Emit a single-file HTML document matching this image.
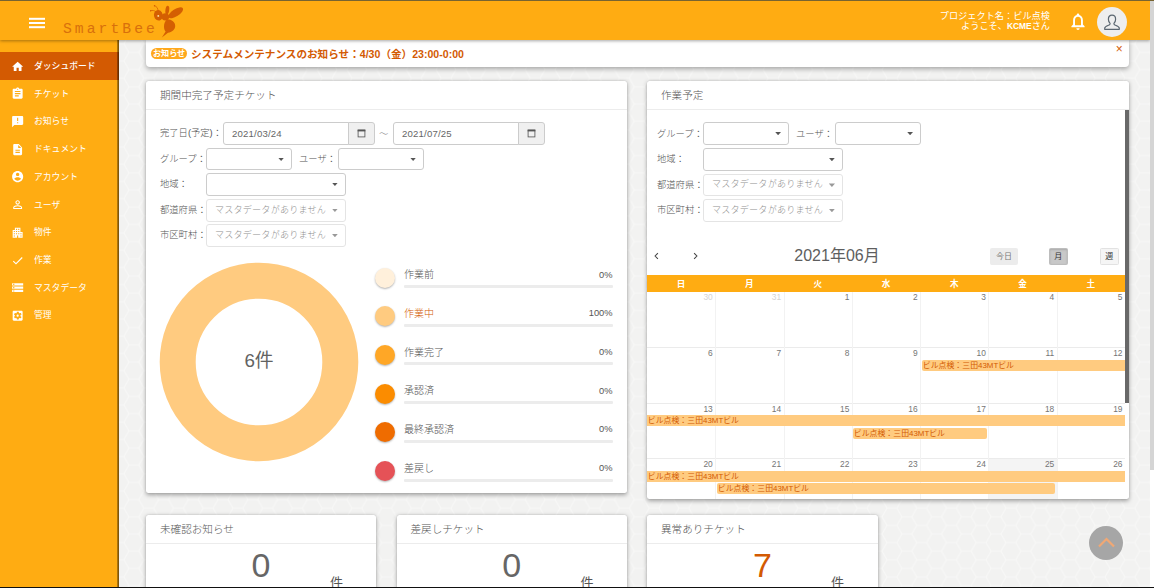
<!DOCTYPE html>
<html lang="ja">
<head>
<meta charset="utf-8">
<title>SmartBee</title>
<style>
*{box-sizing:border-box;margin:0;padding:0}
html,body{width:1154px;height:588px;overflow:hidden}
body{position:relative;background:#f2f2f1;font-family:"Liberation Sans","Noto Sans CJK JP",sans-serif;font-size:9.7px;color:#555;line-height:1}
.abs{position:absolute}
#bg{left:0;top:0;width:1154px;height:588px}
#topline{left:0;top:0;width:1154px;height:1px;background:#776431;z-index:50}
#botline{left:0;top:587px;width:1154px;height:1px;background:#111;z-index:50}
#vscroll{left:1150px;top:1px;width:4px;height:587px;background:#fff;z-index:40}
#vthumb{left:1150px;top:1px;width:4px;height:468.7px;background:#d5d5d5;z-index:41}
#header{left:0;top:1px;width:1150px;height:39px;background:#ffac12;box-shadow:0 1px 3px rgba(0,0,0,.35);z-index:30}
#sidebar{left:0;top:40px;width:119px;height:548px;background:#ffac12;z-index:20}
#sbedge{left:116.5px;top:40px;width:2.5px;height:548px;background:linear-gradient(to right,rgba(0,0,0,.12),rgba(0,0,0,.5) 45%,rgba(0,0,0,.5));z-index:21}
.logo{left:63px;top:20.5px;font-family:"Liberation Mono",monospace;font-size:14.7px;letter-spacing:3.05px;color:#d8700c;white-space:nowrap}
.hd-txt{right:100px;top:10.3px;text-align:right;color:#fff;font-size:9.2px;line-height:10px;white-space:nowrap}
.mi{left:0;width:119px;height:27.7px;color:#fff;font-size:8.8px;white-space:nowrap}
.mi span{position:absolute;left:34px;top:10.1px}
.mi svg{position:absolute;left:11.35px;top:7.65px;width:13.3px;height:13.3px;fill:#fff}
.mi.act{background:#d35a02;font-weight:500}
.card{background:#fff;border-radius:2.5px;box-shadow:0 1.5px 4.5px rgba(0,0,0,.34),0 0 1.5px rgba(0,0,0,.12)}
.ctitle{font-size:10.6px;font-weight:300;color:#555;white-space:nowrap}
.sep{height:1px;background:#ececec}
.lbl{font-size:9.3px;font-weight:300;color:#555;white-space:nowrap}
.inp{border:1px solid #ccc;border-radius:3px;background:#fff;height:22px}
.inp.dis{border-color:#e4e4e4}
.inp .v{position:absolute;left:8px;top:5.5px;font-size:9.6px;letter-spacing:.18px;color:#666;white-space:nowrap}
.inp.dis .v{color:#909090;font-size:9.1px;top:5.6px;font-weight:300}
.caret{position:absolute;right:6.8px;top:8.5px;width:6.2px;height:3.5px;background:#555;clip-path:polygon(0 0,100% 0,50% 100%)}
.inp.dis .caret{background:#999}
.addon{border:1px solid #ccc;border-left:none;border-radius:0 3px 3px 0;background:#f0f0f0;height:22px;width:27px}
.badge{background:#ffa81c;color:#fff;font-weight:bold;font-size:8.1px;height:11.5px;line-height:11.5px;padding:0 2px;border-radius:7px;white-space:nowrap}
.dot{width:20px;height:20px;border-radius:50%;box-shadow:0 1px 2px rgba(0,0,0,.3)}
.lg{font-size:10px;font-weight:300;color:#555;white-space:nowrap}
.bar{height:3px;background:#ececec;border-radius:1px}
.btn{height:17px;border:1px solid #ddd;border-radius:1.5px;font-size:8px;text-align:center;line-height:15px;white-space:nowrap}
.dh{color:#fff;font-weight:bold;font-size:8.6px;text-align:center}
.dn{font-size:8.4px;text-align:right}
.ev{height:11.5px;background:#ffcb80;color:#d35a02;font-size:7.9px;line-height:11.5px;padding-left:0.8px;white-space:nowrap;overflow:hidden}
</style>
</head>
<body>
<svg id="bg" class="abs" width="1154" height="588">
<defs>
<pattern id="hex" width="29.73" height="17.2" patternUnits="userSpaceOnUse" x="5" y="0.8">
<path d="M0 8.60 L4.96 0 L14.87 0 L19.82 8.60 L14.87 17.2 L4.96 17.2 Z M19.82 8.60 L29.73 8.60" fill="none" stroke="#f8f8f7" stroke-width="1"/>
</pattern>
</defs>
<rect width="1154" height="588" fill="#f2f2f1"/>
<rect width="1154" height="588" fill="url(#hex)"/>
</svg>

<div id="topline" class="abs"></div>
<div id="botline" class="abs"></div>
<div id="vscroll" class="abs"></div>
<div id="vthumb" class="abs"></div>

<!-- HEADER -->
<div id="header" class="abs">
  <svg class="abs" style="left:28px;top:15.5px" width="18" height="12" viewBox="0 0 18 12"><rect x="1" y="0.8" width="16" height="2" fill="#fff"/><rect x="1" y="5" width="16" height="2" fill="#fff"/><rect x="1" y="9.2" width="16" height="2" fill="#fff"/></svg>
  <div class="abs logo">SmartBee</div>
  <svg class="abs" style="left:148px;top:2px" width="38" height="38" viewBox="148 3 38 38">
    <g fill="#d45f02" stroke="none">
      <ellipse cx="158.4" cy="15.3" rx="4.4" ry="5.3" transform="rotate(-15 158.4 15.3)"/>
      <ellipse cx="165.4" cy="16.8" rx="3.8" ry="3.6"/>
      <ellipse cx="167.3" cy="9.9" rx="1.9" ry="4.2" transform="rotate(8 167.3 9.9)"/>
      <ellipse cx="175.7" cy="12.8" rx="8.5" ry="3.6" transform="rotate(-32.5 175.7 12.8)"/>
      <path d="M167.3 19.3 C171.8 19.3 175.2 22.3 175.2 26 C175.2 29.6 172 32 168 32.8 C166.4 33.8 164 36 161.8 37.6 C163.2 35.6 164.800 33.200 165.600 31.600 C164.400 30.200 164 28.400 164 26.400 C164 23.600 165.200 20.800 167.300 19.300 Z"/>
    </g>
    <g fill="none" stroke="#d45f02" stroke-width="0.75" stroke-linecap="round">
      <path d="M158.1 10.6 C157.900 8.200 156.800 6.300 154.600 5.800"/>
      <path d="M155.900 11.900 C154.600 10.400 152.400 10 150.700 10.700"/>
    </g>
    <circle cx="154.500" cy="5.800" r="0.700" fill="#d45f02"/><circle cx="150.700" cy="10.700" r="0.700" fill="#d45f02"/>
    <circle cx="158.3" cy="15.9" r="0.95" fill="#ffe3a8"/>
  </svg>
  <div class="abs hd-txt">プロジェクト名：ビル点検<br>ようこそ、<b style="font-size:8.4px">KCME</b>さん</div>
  <svg class="abs" style="left:1069px;top:11px" width="18" height="20" viewBox="0 0 18 20">
    <path d="M9 1.6 C9.8 1.6 10.3 2.2 10.3 3 C12.7 3.7 13.9 5.6 13.9 8.2 L13.9 12.4 L15.6 14.3 L15.6 15.2 L2.4 15.2 L2.4 14.3 L4.1 12.4 L4.1 8.2 C4.1 5.6 5.3 3.7 7.7 3 C7.7 2.2 8.2 1.6 9 1.6 Z M6 8.3 L6 13.3 L12 13.3 L12 8.3 C12 6.2 10.9 4.8 9 4.8 C7.1 4.8 6 6.2 6 8.3 Z M7.4 16.2 L10.6 16.2 C10.6 17.2 9.9 17.9 9 17.9 C8.1 17.9 7.4 17.2 7.4 16.2 Z" fill="#fff" fill-rule="evenodd"/>
  </svg>
  <div class="abs" style="left:1097px;top:6px;width:30px;height:30px;border-radius:50%;background:#eeeeee"></div>
  <svg class="abs" style="left:1097px;top:6px" width="30" height="30" viewBox="0 0 30 30">
    <path d="M15 8.2 C17.3 8.2 18.6 9.9 18.6 12.2 C18.6 14 17.9 15.5 16.9 16.4 C16.9 17.4 17.3 17.8 18.4 18.2 C20.6 19 22.3 19.6 22.3 21.2 L22.3 22.3 L7.7 22.3 L7.7 21.2 C7.7 19.6 9.4 19 11.6 18.2 C12.7 17.8 13.1 17.4 13.1 16.4 C12.1 15.5 11.4 14 11.4 12.2 C11.4 9.9 12.7 8.2 15 8.2 Z" fill="none" stroke="#5b6670" stroke-width="1.2" stroke-linejoin="round"/>
  </svg>
</div>

<div id="sbedge" class="abs"></div>
<!-- SIDEBAR -->
<div id="sidebar" class="abs">
  <div class="abs mi act" style="top:12.0px"><svg viewBox="0 0 24 24"><path d="M10 20v-6h4v6h5v-8h3L12 3 2 12h3v8z"/></svg><span>ダッシュボード</span></div>
  <div class="abs mi" style="top:39.7px"><svg viewBox="0 0 24 24"><path d="M19 3h-4.18C14.4 1.84 13.3 1 12 1c-1.3 0-2.4.84-2.82 2H5c-1.100 0-2 .9-2 2v14c0 1.100.9 2 2 2h14c1.100 0 2-.9 2-2V5c0-1.100-.9-2-2-2zm-7 0c.55 0 1 .45 1 1s-.45 1-1 1-1-.45-1-1 .45-1 1-1zm2 14H7v-2h7v2zm3-4H7v-2h10v2zm0-4H7V7h10v2z"/></svg><span>チケット</span></div>
  <div class="abs mi" style="top:67.4px"><svg viewBox="0 0 24 24"><path d="M20 2H4c-1.100 0-1.990.9-1.990 2L2 22l4-4h14c1.100 0 2-.9 2-2V4c0-1.100-.9-2-2-2zm-7 9h-2V5h2v6zm0 4h-2v-2h2v2z"/></svg><span>お知らせ</span></div>
  <div class="abs mi" style="top:95.1px"><svg viewBox="0 0 24 24"><path d="M14 2H6c-1.100 0-1.990.9-1.990 2L4 20c0 1.100.89 2 1.990 2H18c1.100 0 2-.9 2-2V8l-6-6zm2 16H8v-2h8v2zm0-4H8v-2h8v2zm-3-5V3.500L18.500 9H13z"/></svg><span>ドキュメント</span></div>
  <div class="abs mi" style="top:122.8px"><svg viewBox="0 0 24 24"><path d="M12 2C6.480 2 2 6.480 2 12s4.480 10 10 10 10-4.480 10-10S17.520 2 12 2zm0 3c1.660 0 3 1.340 3 3s-1.340 3-3 3-3-1.340-3-3 1.340-3 3-3zm0 14.200c-2.500 0-4.710-1.280-6-3.220.03-1.990 4-3.080 6-3.080 1.990 0 5.970 1.090 6 3.080-1.290 1.940-3.500 3.220-6 3.220z"/></svg><span>アカウント</span></div>
  <div class="abs mi" style="top:150.5px"><svg viewBox="0 0 24 24"><path d="M12 5.900c1.160 0 2.100.94 2.100 2.100s-.94 2.100-2.100 2.100S9.900 9.160 9.900 8s.94-2.100 2.100-2.100m0 9c2.970 0 6.100 1.460 6.100 2.100v1.100H5.900V17c0-.64 3.130-2.100 6.100-2.100M12 4C9.790 4 8 5.790 8 8s1.790 4 4 4 4-1.790 4-4-1.790-4-4-4zm0 9c-2.670 0-8 1.340-8 4v3h16v-3c0-2.660-5.330-4-8-4z"/></svg><span>ユーザ</span></div>
  <div class="abs mi" style="top:178.2px"><svg viewBox="0 0 24 24"><path d="M17 11V3H7v4H3v14h8v-4h2v4h8V11h-4zM7 19H5v-2h2v2zm0-4H5v-2h2v2zm0-4H5V9h2v2zm4 4H9v-2h2v2zm0-4H9V9h2v2zm0-4H9V5h2v2zm4 8h-2v-2h2v2zm0-4h-2V9h2v2zm0-4h-2V5h2v2zm4 12h-2v-2h2v2zm0-4h-2v-2h2v2z"/></svg><span>物件</span></div>
  <div class="abs mi" style="top:205.9px"><svg viewBox="0 0 24 24"><path d="M9 16.170L4.830 12l-1.420 1.410L9 19 21 7l-1.410-1.410z"/></svg><span>作業</span></div>
  <div class="abs mi" style="top:233.6px"><svg viewBox="0 0 24 24"><path d="M2 20h20v-4H2v4zm2-3h2v2H4v-2zM2 4v4h20V4H2zm4 3H4V5h2v2zm-4 7h20v-4H2v4zm2-3h2v2H4v-2z"/></svg><span>マスタデータ</span></div>
  <div class="abs mi" style="top:261.3px"><svg viewBox="0 0 24 24"><path d="M12 10c-1.100 0-2 .9-2 2s.9 2 2 2 2-.9 2-2-.9-2-2-2zm7-7H5c-1.110 0-2 .9-2 2v14c0 1.100.89 2 2 2h14c1.110 0 2-.9 2-2V5c0-1.100-.89-2-2-2zm-1.750 9c0 .23-.2.460-.5.680l1.480 1.160c.13.110.17.300.8.450l-1.400 2.420c-.9.150-.27.210-.43.150l-1.740-.7c-.36.280-.76.510-1.180.69l-.26 1.850c-.3.170-.18.300-.35.300h-2.800c-.17 0-.32-.13-.35-.29l-.26-1.850c-.43-.18-.82-.410-1.180-.69l-1.740.7c-.16.060-.34 0-.43-.15l-1.400-2.420c-.09-.15-.05-.34.080-.45l1.480-1.160c-.03-.23-.05-.46-.05-.69 0-.23.020-.46.050-.68l-1.480-1.160c-.13-.11-.17-.300-.08-.45l1.400-2.420c.09-.15.270-.21.430-.15l1.740.7c.36-.28.760-.51 1.180-.69l.26-1.850c.03-.17.180-.300.350-.300h2.800c.17 0 .32.130.35.290l.26 1.850c.43.180.82.410 1.180.69l1.740-.7c.16-.06.340 0 .43.150l1.400 2.420c.9.150.5.340-.8.450l-1.480 1.160c.3.230.5.460.5.690z"/></svg><span>管理</span></div>
</div>

<!-- CONTENT PLACEHOLDER -->
<div id="content">
<div class="abs card" id="banner" style="left:146px;top:40px;width:983px;height:26.5px;border-radius:0 0 4px 4px;z-index:10;box-shadow:0 2px 5px rgba(0,0,0,.32)">
<div class="abs badge" style="left:5px;top:7.9px">お知らせ</div>
<div class="abs" style="left:45px;top:8.5px;font-size:10.6px;font-weight:bold;color:#d35a02;white-space:nowrap">システムメンテナンスのお知らせ：4/30（金）23:00-0:00</div>
<div class="abs" style="left:969.8px;top:3px;font-size:12px;color:#d35a02">×</div>
</div>
<div class="abs card" id="card1" style="left:146px;top:80.5px;width:481px;height:412px">
<div class="abs ctitle" style="left:14px;top:9px">期間中完了予定チケット</div>
<div class="abs sep" style="left:0;top:28.5px;width:481px"></div>
<div class="abs lbl" style="left:14px;top:48.5px">完了日(予定)：</div>
<div class="abs inp" style="left:77px;top:41.5px;width:126px;height:22.5px;border-radius:3px 0 0 3px"><span class="v">2021/03/24</span></div>
<div class="abs addon" style="left:202px;top:41.5px;height:22.5px;border-left:1px solid #ccc"><svg class="abs" style="left:7.3px;top:5.3px" width="11" height="11" viewBox="0 0 10 10"><rect x="1.9" y="1.9" width="6.2" height="6.2" fill="none" stroke="#555" stroke-width="0.75"/><rect x="1.5" y="1.5" width="7" height="1.6" fill="#555"/></svg></div>
<div class="abs lbl" style="left:233px;top:49.3px;color:#888">～</div>
<div class="abs inp" style="left:247px;top:41.5px;width:126px;height:22.5px;border-radius:3px 0 0 3px"><span class="v">2021/07/25</span></div>
<div class="abs addon" style="left:372px;top:41.5px;height:22.5px;border-left:1px solid #ccc"><svg class="abs" style="left:7.3px;top:5.3px" width="11" height="11" viewBox="0 0 10 10"><rect x="1.9" y="1.9" width="6.2" height="6.2" fill="none" stroke="#555" stroke-width="0.75"/><rect x="1.5" y="1.5" width="7" height="1.6" fill="#555"/></svg></div>
<div class="abs lbl" style="left:14px;top:74.3px">グループ：</div>
<div class="abs inp" style="left:60px;top:67.5px;width:86px;height:22px"><i class="caret"></i></div>
<div class="abs lbl" style="left:153px;top:74.3px">ユーザ：</div>
<div class="abs inp" style="left:192px;top:67.5px;width:86px;height:22px"><i class="caret"></i></div>
<div class="abs lbl" style="left:14px;top:99.8px">地域：</div>
<div class="abs inp" style="left:60px;top:92.5px;width:139.8px;height:23px"><i class="caret"></i></div>
<div class="abs lbl" style="left:14px;top:125.8px">都道府県：</div>
<div class="abs inp dis" style="left:60px;top:118.5px;width:139.8px;height:22.7px"><span class="v">マスタデータがありません</span><i class="caret"></i></div>
<div class="abs lbl" style="left:14px;top:150.8px">市区町村：</div>
<div class="abs inp dis" style="left:60px;top:143.7px;width:139.8px;height:22.7px"><span class="v">マスタデータがありません</span><i class="caret"></i></div>
<svg class="abs" style="left:13.2px;top:181.2px" width="200" height="200" viewBox="0 0 200 200"><circle cx="100" cy="100" r="81.3" fill="none" stroke="#ffcb80" stroke-width="36"/><text x="100" y="104.6" text-anchor="middle" font-size="18.8" fill="#626262" font-family="'Liberation Sans','Noto Sans CJK JP',sans-serif">6件</text></svg>
<div class="abs dot" style="left:229px;top:187.0px;background:#fff0db"></div>
<div class="abs lg" style="left:258px;top:189.6px;color:#555">作業前</div>
<div class="abs lg" style="right:14.5px;top:190.0px;text-align:right;font-size:9.3px">0%</div>
<div class="abs bar" style="left:258px;top:204.5px;width:208.500px"></div>
<div class="abs dot" style="left:229px;top:225.7px;background:#ffcb80"></div>
<div class="abs lg" style="left:258px;top:228.3px;color:#d35a02">作業中</div>
<div class="abs lg" style="right:14.5px;top:228.7px;text-align:right;font-size:9.3px">100%</div>
<div class="abs bar" style="left:258px;top:243.2px;width:208.500px"></div>
<div class="abs dot" style="left:229px;top:264.4px;background:#ffa726"></div>
<div class="abs lg" style="left:258px;top:267.0px;color:#555">作業完了</div>
<div class="abs lg" style="right:14.5px;top:267.4px;text-align:right;font-size:9.3px">0%</div>
<div class="abs bar" style="left:258px;top:281.9px;width:208.500px"></div>
<div class="abs dot" style="left:229px;top:303.1px;background:#fb8c00"></div>
<div class="abs lg" style="left:258px;top:305.7px;color:#555">承認済</div>
<div class="abs lg" style="right:14.5px;top:306.1px;text-align:right;font-size:9.3px">0%</div>
<div class="abs bar" style="left:258px;top:320.6px;width:208.500px"></div>
<div class="abs dot" style="left:229px;top:341.8px;background:#ef6c00"></div>
<div class="abs lg" style="left:258px;top:344.4px;color:#555">最終承認済</div>
<div class="abs lg" style="right:14.5px;top:344.8px;text-align:right;font-size:9.3px">0%</div>
<div class="abs bar" style="left:258px;top:359.3px;width:208.500px"></div>
<div class="abs dot" style="left:229px;top:380.5px;background:#e55257"></div>
<div class="abs lg" style="left:258px;top:383.1px;color:#555">差戻し</div>
<div class="abs lg" style="right:14.5px;top:383.5px;text-align:right;font-size:9.3px">0%</div>
<div class="abs bar" style="left:258px;top:398.0px;width:208.500px"></div>
</div>
<div class="abs card" id="card2" style="left:647px;top:80.5px;width:482px;height:418.5px;overflow:hidden">
<div class="abs ctitle" style="left:14px;top:9px">作業予定</div>
<div class="abs sep" style="left:0;top:28.5px;width:482px"></div>
<div class="abs" style="left:478px;top:29px;width:4px;height:293.3px;background:#686868"></div>
<div class="abs lbl" style="left:10px;top:49px">グループ：</div>
<div class="abs inp" style="left:56px;top:41.7px;width:86px;height:22.5px"><i class="caret"></i></div>
<div class="abs lbl" style="left:149px;top:49px">ユーザ：</div>
<div class="abs inp" style="left:188px;top:41.7px;width:86px;height:22.5px"><i class="caret"></i></div>
<div class="abs lbl" style="left:10px;top:74.5px">地域：</div>
<div class="abs inp" style="left:56px;top:67.7px;width:139.8px;height:22.6px"><i class="caret"></i></div>
<div class="abs lbl" style="left:10px;top:100.3px">都道府県：</div>
<div class="abs inp dis" style="left:56px;top:93.4px;width:139.8px;height:22.3px"><span class="v">マスタデータがありません</span><i class="caret"></i></div>
<div class="abs lbl" style="left:10px;top:125.8px">市区町村：</div>
<div class="abs inp dis" style="left:56px;top:118.7px;width:139.8px;height:22.5px"><span class="v">マスタデータがありません</span><i class="caret"></i></div>
<svg class="abs" style="left:6px;top:171.500px" width="7" height="8" viewBox="0 0 7 8"><path d="M4.900 1.200 L2.100 4 L4.900 6.800" fill="none" stroke="#444" stroke-width="1.050"/></svg>
<svg class="abs" style="left:44.500px;top:171.500px" width="7" height="8" viewBox="0 0 7 8"><path d="M2.100 1.200 L4.900 4 L2.100 6.800" fill="none" stroke="#444" stroke-width="1.050"/></svg>
<div class="abs" style="left:90px;top:167.5px;width:200px;text-align:center;font-size:16px;color:#5e5e5e;white-space:nowrap">2021年06月</div>
<div class="abs btn" style="left:343px;top:167.5px;width:27.8px;background:#ececec;border-color:#ececec;color:#777">今日</div>
<div class="abs btn" style="left:401.7px;top:167.5px;width:19px;background:#c8c8c8;border-color:#bdbdbd;color:#333;box-shadow:inset 0 1px 2px rgba(0,0,0,.15)">月</div>
<div class="abs btn" style="left:452.8px;top:167.5px;width:19px;background:#f5f5f5;border-color:#e2e2e2;color:#333">週</div>
<div class="abs" style="left:0;top:194.5px;width:478px;height:17px;background:#ffac12"></div>
<div class="abs dh" style="left:0.00px;top:199.2px;width:68.29px">日</div>
<div class="abs dh" style="left:68.29px;top:199.2px;width:68.29px">月</div>
<div class="abs dh" style="left:136.57px;top:199.2px;width:68.29px">火</div>
<div class="abs dh" style="left:204.86px;top:199.2px;width:68.29px">水</div>
<div class="abs dh" style="left:273.14px;top:199.2px;width:68.29px">木</div>
<div class="abs dh" style="left:341.43px;top:199.2px;width:68.29px">金</div>
<div class="abs dh" style="left:409.71px;top:199.2px;width:68.29px">土</div>
<div class="abs" style="left:341.43px;top:377.5px;width:68.29px;height:56px;background:#f4f4f4"></div>
<div class="abs dn" style="left:0.00px;top:212.3px;width:65.79px;color:#d4d4d4">30</div>
<div class="abs dn" style="left:68.29px;top:212.3px;width:65.79px;color:#d4d4d4">31</div>
<div class="abs dn" style="left:136.57px;top:212.3px;width:65.79px;color:#757575">1</div>
<div class="abs dn" style="left:204.86px;top:212.3px;width:65.79px;color:#757575">2</div>
<div class="abs dn" style="left:273.14px;top:212.3px;width:65.79px;color:#757575">3</div>
<div class="abs dn" style="left:341.43px;top:212.3px;width:65.79px;color:#757575">4</div>
<div class="abs dn" style="left:409.71px;top:212.3px;width:65.79px;color:#757575">5</div>
<div class="abs" style="left:0;top:266.5px;width:478px;height:1px;background:#ebebeb"></div>
<div class="abs dn" style="left:0.00px;top:268.5px;width:65.79px;color:#757575">6</div>
<div class="abs dn" style="left:68.29px;top:268.5px;width:65.79px;color:#757575">7</div>
<div class="abs dn" style="left:136.57px;top:268.5px;width:65.79px;color:#757575">8</div>
<div class="abs dn" style="left:204.86px;top:268.5px;width:65.79px;color:#757575">9</div>
<div class="abs dn" style="left:273.14px;top:268.5px;width:65.79px;color:#757575">10</div>
<div class="abs dn" style="left:341.43px;top:268.5px;width:65.79px;color:#757575">11</div>
<div class="abs dn" style="left:409.71px;top:268.5px;width:65.79px;color:#757575">12</div>
<div class="abs" style="left:0;top:322.5px;width:478px;height:1px;background:#ebebeb"></div>
<div class="abs dn" style="left:0.00px;top:324.5px;width:65.79px;color:#757575">13</div>
<div class="abs dn" style="left:68.29px;top:324.5px;width:65.79px;color:#757575">14</div>
<div class="abs dn" style="left:136.57px;top:324.5px;width:65.79px;color:#757575">15</div>
<div class="abs dn" style="left:204.86px;top:324.5px;width:65.79px;color:#757575">16</div>
<div class="abs dn" style="left:273.14px;top:324.5px;width:65.79px;color:#757575">17</div>
<div class="abs dn" style="left:341.43px;top:324.5px;width:65.79px;color:#757575">18</div>
<div class="abs dn" style="left:409.71px;top:324.5px;width:65.79px;color:#757575">19</div>
<div class="abs" style="left:0;top:377.5px;width:478px;height:1px;background:#ebebeb"></div>
<div class="abs dn" style="left:0.00px;top:379.5px;width:65.79px;color:#757575">20</div>
<div class="abs dn" style="left:68.29px;top:379.5px;width:65.79px;color:#757575">21</div>
<div class="abs dn" style="left:136.57px;top:379.5px;width:65.79px;color:#757575">22</div>
<div class="abs dn" style="left:204.86px;top:379.5px;width:65.79px;color:#757575">23</div>
<div class="abs dn" style="left:273.14px;top:379.5px;width:65.79px;color:#757575">24</div>
<div class="abs dn" style="left:341.43px;top:379.5px;width:65.79px;color:#757575">25</div>
<div class="abs dn" style="left:409.71px;top:379.5px;width:65.79px;color:#757575">26</div>
<div class="abs" style="left:68.29px;top:211.5px;width:1px;height:230px;background:#f2f2f2"></div>
<div class="abs" style="left:136.57px;top:211.5px;width:1px;height:230px;background:#f2f2f2"></div>
<div class="abs" style="left:204.86px;top:211.5px;width:1px;height:230px;background:#f2f2f2"></div>
<div class="abs" style="left:273.14px;top:211.5px;width:1px;height:230px;background:#f2f2f2"></div>
<div class="abs" style="left:341.43px;top:211.5px;width:1px;height:230px;background:#f2f2f2"></div>
<div class="abs" style="left:409.71px;top:211.5px;width:1px;height:230px;background:#f2f2f2"></div>
<div class="abs ev" style="left:275.0px;top:279.0px;width:203.0px;border-radius:2px 0 0 2px">ビル点検：三田43MTビル</div>
<div class="abs ev" style="left:0.0px;top:334.0px;width:478.0px;border-radius:0 0 0 0">ビル点検：三田43MTビル</div>
<div class="abs ev" style="left:206.0px;top:347.0px;width:134.0px;border-radius:2px 2px 2px 2px">ビル点検：三田43MTビル</div>
<div class="abs ev" style="left:0.0px;top:390.0px;width:478.0px;border-radius:0 0 0 0">ビル点検：三田43MTビル</div>
<div class="abs ev" style="left:70.0px;top:402.3px;width:338.0px;border-radius:2px 2px 2px 2px">ビル点検：三田43MTビル</div>
</div>
<div class="abs card" style="left:146px;top:515px;width:230px;height:90px">
<div class="abs ctitle" style="left:14px;top:9px">未確認お知らせ</div>
<div class="abs sep" style="left:0;top:28px;width:230px"></div>
<div class="abs" style="left:0;top:33px;width:230px;text-align:center;font-size:34px;color:#666">0</div>
<div class="abs" style="left:184px;top:61.3px;font-size:13px;color:#555">件</div>
</div>
<div class="abs card" style="left:396.5px;top:515px;width:230.5px;height:90px">
<div class="abs ctitle" style="left:14px;top:9px">差戻しチケット</div>
<div class="abs sep" style="left:0;top:28px;width:230.5px"></div>
<div class="abs" style="left:0;top:33px;width:230.5px;text-align:center;font-size:34px;color:#666">0</div>
<div class="abs" style="left:184px;top:61.3px;font-size:13px;color:#555">件</div>
</div>
<div class="abs card" style="left:647px;top:515px;width:231px;height:90px">
<div class="abs ctitle" style="left:14px;top:9px">異常ありチケット</div>
<div class="abs sep" style="left:0;top:28px;width:231px"></div>
<div class="abs" style="left:0;top:33px;width:231px;text-align:center;font-size:34px;color:#d35a02">7</div>
<div class="abs" style="left:184px;top:61.3px;font-size:13px;color:#555">件</div>
</div>
<div class="abs" style="left:1088.7px;top:526.2px;width:34.3px;height:34.3px;border-radius:50%;background:#a6a6a6"></div>
<svg class="abs" style="left:1088.500px;top:526px" width="35" height="35" viewBox="0 0 35 35"><path d="M10 20.500 L17.500 13 L25 20.500" fill="none" stroke="#f0a875" stroke-width="2.200"/></svg>
</div><!--/content-->
</body>
</html>
